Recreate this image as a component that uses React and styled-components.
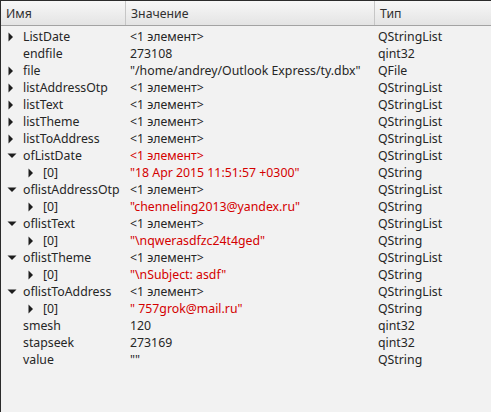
import React from 'react';
import styled, { createGlobalStyle } from 'styled-components';

const GlobalStyle = createGlobalStyle`
  html, body {
    margin: 0;
    padding: 0;
    background: #f2f2f2;
  }
  body {
    font-family: 'Noto Sans', 'DejaVu Sans', sans-serif;
    font-size: 12.3px;
    color: #262626;
  }
`;

const Frame = styled.div`
  width: 491px;
  height: 412px;
  box-sizing: border-box;
  border-top: 1px solid #2b2b2b;
  border-left: 1px solid #2b2b2b;
  background: #f2f2f2;
  overflow: hidden;
`;

const cols = '125px 249px 1fr';

const Header = styled.div`
  display: grid;
  grid-template-columns: ${cols};
  height: 24px;
  background: linear-gradient(to bottom, #f7f7f7, #e4e4e4);
  border-bottom: 1px solid #a3a3a3;
`;

const HeaderCell = styled.div`
  display: flex;
  align-items: center;
  padding-left: 5px;
  border-right: ${p => (p.$last ? 'none' : '1px solid #c6c6c6')};
  color: #303030;
`;

const Body = styled.div`
  padding-top: 2px;
`;

const Row = styled.div`
  display: grid;
  grid-template-columns: ${cols};
  height: 17px;
  align-items: center;
  white-space: nowrap;
`;

const NameCell = styled.div`
  display: flex;
  align-items: center;
  padding-left: ${p => 5 + p.$depth * 20}px;
`;

const Expander = styled.span`
  width: 17px;
  display: inline-flex;
  align-items: center;
  flex-shrink: 0;
`;

const ValueCell = styled.div`
  padding-left: 4px;
  color: ${p => (p.$red ? '#d40000' : '#262626')};
`;

const TypeCell = styled.div`
  padding-left: 3px;
`;

const Arrow = ({ open }) => (
  <svg width="12" height="10" viewBox="0 0 12 10">
    {open ? (
      <path d="M1.5 2.5 L10.5 2.5 L6 7 Z" fill="#1e1e1e" />
    ) : (
      <path d="M2.5 0.5 L7 5 L2.5 9.5 Z" fill="#1e1e1e" />
    )}
  </svg>
);

const rows = [
  { name: 'ListDate', value: '<1 элемент>', type: 'QStringList', exp: 'closed' },
  { name: 'endfile', value: '273108', type: 'qint32' },
  { name: 'file', value: '"/home/andrey/Outlook Express/ty.dbx"', type: 'QFile', exp: 'closed' },
  { name: 'listAddressOtp', value: '<1 элемент>', type: 'QStringList', exp: 'closed' },
  { name: 'listText', value: '<1 элемент>', type: 'QStringList', exp: 'closed' },
  { name: 'listTheme', value: '<1 элемент>', type: 'QStringList', exp: 'closed' },
  { name: 'listToAddress', value: '<1 элемент>', type: 'QStringList', exp: 'closed' },
  { name: 'ofListDate', value: '<1 элемент>', type: 'QStringList', exp: 'open', red: true },
  { name: '[0]', value: '"18 Apr 2015 11:51:57 +0300"', type: 'QString', exp: 'closed', depth: 1, red: true },
  { name: 'oflistAddressOtp', value: '<1 элемент>', type: 'QStringList', exp: 'open' },
  { name: '[0]', value: '"chenneling2013@yandex.ru"', type: 'QString', exp: 'closed', depth: 1, red: true },
  { name: 'oflistText', value: '<1 элемент>', type: 'QStringList', exp: 'open' },
  { name: '[0]', value: '"\\nqwerasdfzc24t4ged"', type: 'QString', exp: 'closed', depth: 1, red: true },
  { name: 'oflistTheme', value: '<1 элемент>', type: 'QStringList', exp: 'open' },
  { name: '[0]', value: '"\\nSubject: asdf"', type: 'QString', exp: 'closed', depth: 1, red: true },
  { name: 'oflistToAddress', value: '<1 элемент>', type: 'QStringList', exp: 'open' },
  { name: '[0]', value: '" 757grok@mail.ru"', type: 'QString', exp: 'closed', depth: 1, red: true },
  { name: 'smesh', value: '120', type: 'qint32' },
  { name: 'stapseek', value: '273169', type: 'qint32' },
  { name: 'value', value: '""', type: 'QString' },
];

export default function App() {
  return (
    <Frame>
      <GlobalStyle />
      <Header>
        <HeaderCell>Имя</HeaderCell>
        <HeaderCell>Значение</HeaderCell>
        <HeaderCell $last>Тип</HeaderCell>
      </Header>
      <Body>
        {rows.map((r, i) => (
          <Row key={i}>
            <NameCell $depth={r.depth || 0}>
              <Expander>{r.exp && <Arrow open={r.exp === 'open'} />}</Expander>
              {r.name}
            </NameCell>
            <ValueCell $red={r.red}>{r.value}</ValueCell>
            <TypeCell>{r.type}</TypeCell>
          </Row>
        ))}
      </Body>
    </Frame>
  );
}
